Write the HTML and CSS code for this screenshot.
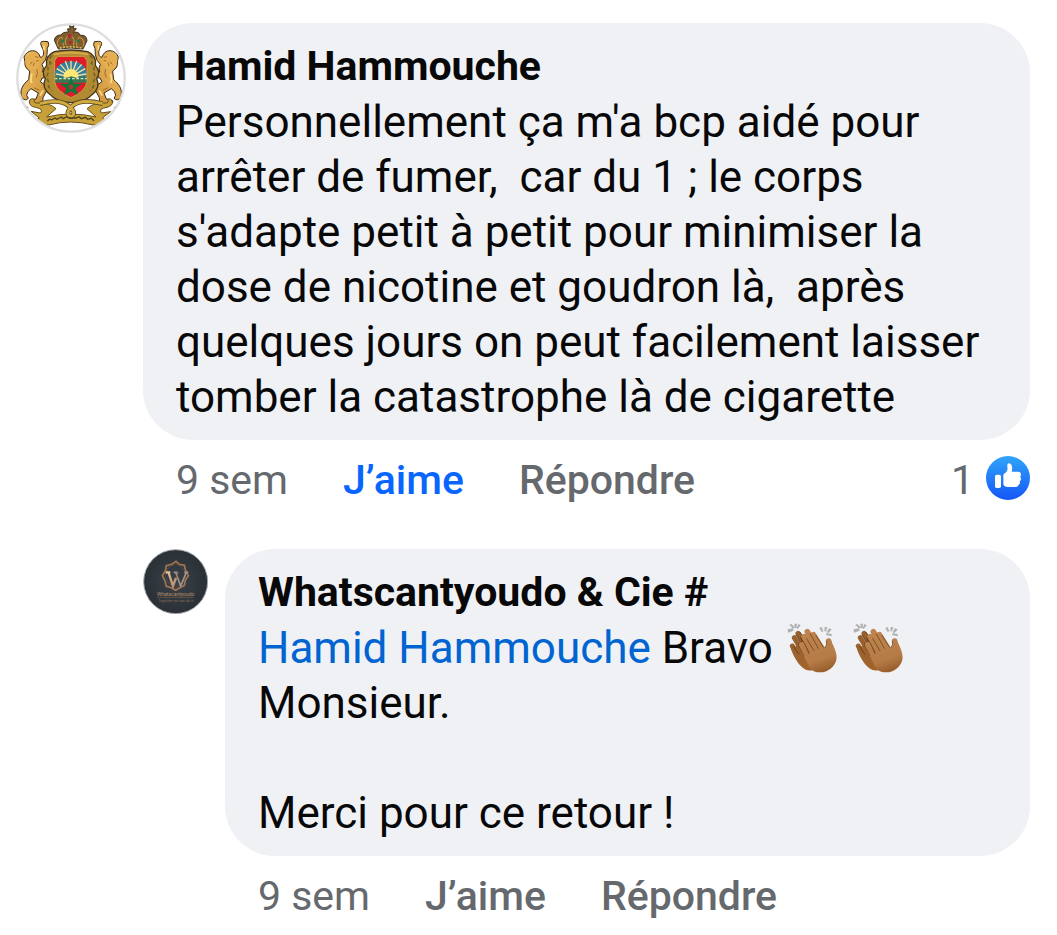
FILE: index.html
```html
<!DOCTYPE html>
<html lang="fr">
<head>
<meta charset="utf-8">
<meta name="viewport" content="width=device-width, initial-scale=1">
<title>Commentaires</title>
<link rel="stylesheet" href="styles.css">
</head>
<body>
<svg class="defs" aria-hidden="true">
  <defs>
    <linearGradient id="skin" gradientUnits="userSpaceOnUse" x1="90" y1="60" x2="135" y2="190">
      <stop offset="0" stop-color="#bd8450"/><stop offset="0.7" stop-color="#b57c48"/><stop offset="1" stop-color="#955a28"/>
    </linearGradient>
    <linearGradient id="skinBack" gradientUnits="userSpaceOnUse" x1="50" y1="65" x2="95" y2="185">
      <stop offset="0" stop-color="#95602f"/><stop offset="1" stop-color="#a3642c"/>
    </linearGradient>
    <symbol id="clap" viewBox="22 33 165 165">
      <g fill="#aeb0b2">
        <path d="M33 58l15-3 3 7-17 6zM38 44l6-2 10 10-4 5zM53 41h8l-2 13h-5zM66 42l6 4-9 11-4-3z"/>
        <path d="M128 54l7-3 5 13-5 2zM144 51h8l-4 13h-5zM158 54l7 5-11 11-4-4zM149 70l16 2v7l-17-4z"/>
      </g>
      <!-- back hand -->
      <g fill="none" stroke="url(#skinBack)" stroke-linecap="round" stroke-width="15">
        <path d="M64 70L92 118M53 83L86 140M47 108L70 150"/>
      </g>
      <path d="M43 118C52 142 66 165 80 175C90 182 101 184 110 179L120 140L75 96L58 108Z" fill="url(#skinBack)"/>
      <path d="M59 75L74 101M51 110L66 133M70 67L82 84" fill="none" stroke="#70401a" stroke-width="3" stroke-linecap="round"/>
      <!-- front hand -->
      <g fill="none" stroke="#6e3f19" stroke-linecap="round" stroke-width="19">
        <path d="M74 104L94 136M81 84L105 124"/>
      </g>
      <g fill="none" stroke="url(#skin)" stroke-linecap="round" stroke-width="17">
        <path d="M75 104L101 152M82 80L112 133M92 65L124 124M110 74L142 125M156 93L162 124"/>
      </g>
      <path d="M94 133L105 120L141 111C151 113 151 105 149 94L163 92C173 112 183 133 179 149C174 171 153 187 131 187C110 188 99 177 93 161L82 139Z" fill="url(#skin)"/>
      <path d="M83 99L97 131M90 86L112 122M101 72L125 115M118 76L140 111" fill="none" stroke="#805022" stroke-width="3" stroke-linecap="round"/>
      <path d="M150 94Q152 106 145 113" fill="none" stroke="#925d2d" stroke-width="3" stroke-linecap="round"/>
    </symbol>
  </defs>
</svg>

<main class="thread">
  <article class="comment">
    <svg class="avatar" viewBox="18 24 330 330" role="img" aria-label="Photo de profil de Hamid Hammouche">
      <defs>
        <clipPath id="round"><circle cx="183" cy="189" r="161"/></clipPath>
        <clipPath id="shieldClip"><path d="M143 124H222L231 137V200Q226 230 183 248Q139 230 134 200V137Z"/></clipPath>
        <linearGradient id="gold" x1="0" y1="0" x2="1" y2="1"><stop offset="0" stop-color="#f3c467"/><stop offset="1" stop-color="#c98f38"/></linearGradient>
        <g id="lion">
          <path d="M56 214C26 232 20 250 39 267L54 280" fill="none" stroke="#6b4b1c" stroke-width="5"/>
          <path d="M91 127C102 126 103 112 98 101L93 90Q89 79 101 79L114 80Q120 88 112 100L111 119Q108 138 96 148Q103 158 98 171L117 173Q126 181 116 187L97 189L91 200L109 213Q116 222 109 229L99 248L98 263Q88 272 72 268L60 264Q54 257 65 254L78 252L85 234L63 221Q50 230 50 241L55 250Q45 260 36 248C26 223 42 206 56 194L59 168Q42 157 45 141L42 126Q50 108 67 107Q85 107 91 127Z" fill="url(#gold)" stroke="#3a2a14" stroke-width="3"/>
          <path d="M45 128Q42 150 60 165L68 157L76 167L84 149L90 141L84 119Q64 106 45 128Z" fill="#e5ae50"/>
          <path d="M60 148l7-8M70 153l3-10M76 125l9 2M78 138l8-1M80 163q6 11-2 25M72 218l16 8" fill="none" stroke="#a06c28" stroke-width="3"/>
          <path d="M66 176q-7 20 0 28M99 226l-9 16M102 91v15" fill="none" stroke="#ffdb87" stroke-width="5"/>
        </g>
      </defs>
      <circle cx="183" cy="189" r="163" fill="#fff"/>
      <g clip-path="url(#round)">
        <use href="#lion"/>
        <use href="#lion" transform="matrix(-1 0 0 1 367 0)"/>
        <!-- mantle -->
        <path d="M133 110Q105 122 110 151Q92 171 106 191Q93 218 121 239Q137 260 183 263Q229 260 246 239Q273 218 260 191Q274 171 256 151Q261 122 233 110Q182 100 133 110Z" fill="#b18b32" stroke="#46361a" stroke-width="4"/>
        <path d="M126 121q-12 12-4 24q-14 12-5 24q-11 17-1 31q-4 18 10 26M240 121q12 12 4 24q14 12 5 24q11 17 1 31q4 18-10 26" fill="none" stroke="#76612a" stroke-width="5" stroke-dasharray="12 7"/>
        <path d="M132 118Q183 108 234 118" fill="none" stroke="#d6ad4d" stroke-width="5"/>
        <!-- shield -->
        <g clip-path="url(#shieldClip)">
          <path d="M130 120H235V252H130Z" fill="#e01b2a"/>
          <path d="M132 188Q133 142 183 139Q232 142 232 188Z" fill="#34819f"/>
          <path d="M183 185L138 177M183 185L140 161M183 185L151 148M183 185L166 138M183 185V137M183 185L200 138M183 185L215 148M183 185L226 161M183 185L229 177" stroke="#f5dfa0" stroke-width="4"/>
          <path d="M160 188Q163 162 183 162Q203 162 206 188Z" fill="#ffe773"/>
          <path d="M133 188L148 182L166 190L184 184L202 190L220 182L232 188V203H133Z" fill="#3b7755"/>
          <path d="M134 191H232" stroke="#d4e3cb" stroke-width="4" stroke-dasharray="8 5"/>
          <path d="M183 186L191 206H217L197 220L205 243L183 229L161 243L169 220L149 206H175Z" fill="#12763a"/>
          <path d="M183 208l7 6l-3 9h-8l-3-9z" fill="#b83532"/>
        </g>
        <path d="M143 124H222L231 137V200Q226 230 183 248Q139 230 134 200V137Z" fill="none" stroke="#c89f3d" stroke-width="3"/>
        <!-- crown -->
        <path d="M145 102L133 76Q135 60 153 60Q157 51 176 51L172 42L181 41L178 31L186 36L192 31L190 41H199L190 52Q207 49 211 61Q230 59 231 77L219 102Q182 96 145 102Z" fill="#805d2b" stroke="#3c301b" stroke-width="3"/>
        <path d="M145 95q-10-19 10-29q6 12 5 26M168 91q-8-20 11-33q19 13 11 33M200 92q-3-16 8-26q20 10 11 29" fill="none" stroke="#c99c50" stroke-width="3"/>
        <path d="M149 99q34-7 67 0" fill="none" stroke="#d6b565" stroke-width="5" stroke-dasharray="6 4"/>
        <circle cx="179" cy="62" r="6" fill="#b82430"/><circle cx="159" cy="78" r="5" fill="#247940"/><circle cx="204" cy="78" r="5" fill="#247940"/><circle cx="181" cy="82" r="5" fill="#b82430"/>
        <!-- ribbon -->
        <path d="M74 253Q61 247 58 260Q58 274 76 277Q103 282 91 294L63 289L88 309L77 315Q94 330 116 330Q181 312 249 330Q272 330 288 315L278 308L302 290L274 294Q264 281 291 277Q309 272 307 260Q302 247 292 254Q301 265 282 264Q250 263 231 281L258 306Q183 288 110 306L138 281Q118 263 85 264Q67 265 74 253Z" fill="#c7a038" stroke="#65501d" stroke-width="3"/>
        <path d="M90 266Q150 250 176 273Q203 295 183 305Q162 296 188 272Q212 250 278 266" fill="none" stroke="#5c491d" stroke-width="14"/>
        <path d="M90 266Q150 250 176 273Q203 295 183 305Q162 296 188 272Q212 250 278 266" fill="none" stroke="#cfab42" stroke-width="9"/>
        <path d="M112 318q8-9 13-3l10-6 6 4 13-7 5 5 12-6 7 4h20l9-4 7 6 12-4 7 6 11-3 8 7" fill="none" stroke="#49421e" stroke-width="4"/>
      </g>
      <circle cx="183" cy="189" r="161" fill="none" stroke="#dedede" stroke-width="7"/>
    </svg>
    <div class="content">
      <div class="bubble">
        <h2 class="author">Hamid Hammouche</h2>
        <p class="message">Personnellement ça m'a bcp aidé pour arrêter de fumer,&nbsp; car du 1 ; le corps s'adapte petit à petit pour minimiser la dose de nicotine et goudron là,&nbsp; après quelques jours on peut facilement laisser tomber la catastrophe là de cigarette</p>
      </div>
      <div class="actions">
        <span class="time">9 sem</span>
        <button class="action liked" type="button">J’aime</button>
        <button class="action" type="button">Répondre</button>
        <span class="reactions">1
          <svg class="like" viewBox="165 48 132 132" role="img" aria-label="J’aime">
            <defs><linearGradient id="blue" x1="0" y1="0" x2="0" y2="1"><stop offset="0" stop-color="#30a5fb"/><stop offset="1" stop-color="#1456f5"/></linearGradient></defs>
            <circle cx="231" cy="114" r="66" fill="url(#blue)"/>
            <rect x="192" y="104" width="18" height="40" rx="5" fill="#fff"/>
            <path d="M217 107Q217 103 221 100C228 95 231 89 229 80V75Q229 70 234 70C242 70 246 82 242 95H261Q270 96 270 103Q270 108 267 110Q271 113 270 118Q269 122 266 124Q269 131 263 134Q262 141 252 141H231Q217 140 217 131Z" fill="#fff"/>
          </svg>
        </span>
      </div>
    </div>
  </article>

  <article class="comment reply">
    <svg class="avatar" viewBox="21 21 195 195" role="img" aria-label="Photo de profil de Whatscantyoudo &amp; Cie">
      <defs>
        <radialGradient id="dark"><stop offset="0" stop-color="#394149"/><stop offset="1" stop-color="#2a3036"/></radialGradient>
        <linearGradient id="copper" x1="0" y1="0" x2="1" y2="1"><stop offset="0" stop-color="#f0c59c"/><stop offset="1" stop-color="#b08a6b"/></linearGradient>
      </defs>
      <circle cx="119" cy="119" r="96" fill="url(#dark)" stroke="#a5a9ac" stroke-width="3"/>
      <path d="M120 58L130 67L145 70L148 84L157 101L148 115L145 130L132 137L119 145L106 137L91 133L87 117L79 101L88 87L91 71L107 67Z" fill="none" stroke="#a4764f" stroke-width="5"/>
      <path d="M119 65L135 73L145 87L149 101L140 124L119 136L98 125L87 102L97 77Z" fill="none" stroke="#70513c" stroke-width="2"/>
      <path d="M89 91H103M97 90L111 132L120 108" fill="none" stroke="url(#copper)" stroke-width="7"/>
      <path d="M113 91H125M119 91L134 132L151 91M145 91H157" fill="none" stroke="#a1928a" stroke-width="5"/>
      <path d="M120 108L128 91" stroke="#815e48" stroke-width="3"/>
      <text class="logo-name" x="119" y="161" text-anchor="middle">Whatscantyoudo</text>
      <path d="M64 166H173" stroke="#7e604a" stroke-width="2"/>
      <text class="logo-line" x="119" y="179" text-anchor="middle">Together we can do it</text>
    </svg>
    <div class="content">
      <div class="bubble">
        <h2 class="author">Whatscantyoudo &amp; Cie #</h2>
        <p class="message"><a class="mention" href="#">Hamid Hammouche</a> Bravo <svg class="emoji" role="img" aria-label="Applaudissements"><use href="#clap"/></svg> <svg class="emoji" role="img" aria-label="Applaudissements"><use href="#clap"/></svg><br>Monsieur.</p>
        <p class="message spaced">Merci pour ce retour !</p>
      </div>
      <div class="actions">
        <span class="time">9 sem</span>
        <button class="action" type="button">J’aime</button>
        <button class="action" type="button">Répondre</button>
      </div>
    </div>
  </article>
</main>
</body>
</html>
```
FILE: styles.css
```css
* {
  box-sizing: border-box;
}

body {
  margin: 0;
  background: #fff;
  color: #080809;
  font-family: Roboto, "Liberation Sans", sans-serif;
}

.defs {
  position: absolute;
  width: 0;
  height: 0;
}

.thread {
  display: flex;
  flex-direction: column;
  gap: 29px;
  padding: 23px 27px 0 16px;
}

.comment {
  display: flex;
  align-items: flex-start;
  gap: 17px;
}

.reply {
  padding-left: 127px;
}

.avatar {
  flex: none;
  width: 110px;
  height: 110px;
}

.reply .avatar {
  width: 65px;
  height: 65px;
}

.content {
  flex: 1;
  min-width: 0;
}

.bubble {
  padding: 16px 33px 15px;
  border-radius: 50px;
  background: #f0f1f5;
}

.author {
  margin: 0 0 1px;
  font-size: 41px;
  font-weight: 700;
  line-height: 55px;
}

.message {
  margin: 0;
  font-size: 44px;
  line-height: 55px;
}

.spaced {
  margin-top: 55px;
}

.mention {
  color: #0064d1;
  text-decoration: none;
}

.emoji {
  width: 55px;
  height: 55px;
  vertical-align: top;
}

.actions {
  display: flex;
  align-items: center;
  gap: 55px;
  height: 80px;
  padding-left: 33px;
  color: #65686c;
  font-size: 41px;
  line-height: 55px;
}

.action {
  padding: 0;
  border: 0;
  background: none;
  color: inherit;
  font: inherit;
  font-weight: 500;
  cursor: pointer;
}

.liked {
  color: #0866ff;
}

.reactions {
  display: flex;
  align-items: center;
  gap: 12px;
  margin-left: auto;
}

.like {
  width: 44px;
  height: 44px;
  margin-bottom: 4px;
}

.logo-name {
  fill: #b98c69;
  font-size: 15px;
}

.logo-line {
  fill: #8a6b54;
  font-size: 11px;
}
```
